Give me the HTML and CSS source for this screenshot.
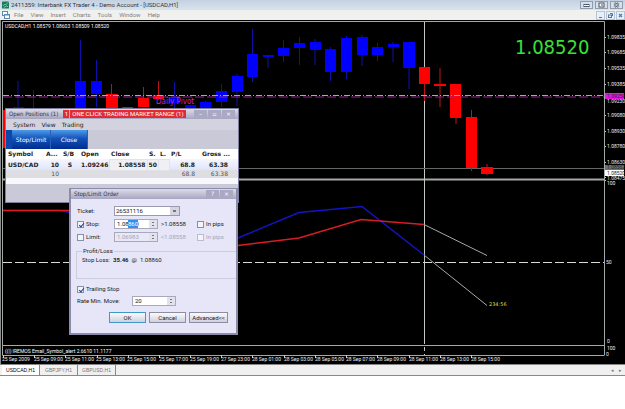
FILE: index.html
```html
<!DOCTYPE html>
<html lang="en">
<head>
<meta charset="utf-8">
<title>2411359: Interbank FX Trader 4 - Demo Account - [USDCAD,H1]</title>
<link rel="stylesheet" href="styles.css">
</head>
<body>
<header class="titlebar">
  <svg class="app-icon" viewBox="0 0 8 8" aria-hidden="true"><rect width="8" height="8" rx="1" fill="#1c7a5c"/><path d="M1 5l2-2 1 1 3-3M2 7l3-2 2 1" stroke="#7fdcb4" fill="none"/></svg>
  <h1 class="app-title">2411359: Interbank FX Trader 4 - Demo Account - [USDCAD,H1]</h1>
  <div class="win-buttons">
    <button class="win-btn" aria-label="Minimize"><svg viewBox="0 0 11 6"><rect x="3" y="2.500" width="5" height="2" fill="#fff" stroke="#4c5563"/></svg></button>
    <button class="win-btn" aria-label="Maximize"><svg viewBox="0 0 11 6"><rect x="3" y="1" width="5" height="4" fill="#fff" stroke="#4c5563"/><path d="M5 3h2" stroke="#4c5563"/></svg></button>
    <button class="win-btn" aria-label="Close"><svg viewBox="0 0 11 6"><path d="M3.500 1l4 4M7.500 1l-4 4" stroke="#4c5563" stroke-width="2.400"/><path d="M3.500 1l4 4M7.500 1l-4 4" stroke="#fff" stroke-width=".8"/></svg></button>
  </div>
</header>
<nav class="menubar">
  <svg class="mdi-icon" viewBox="0 0 8 8" aria-hidden="true"><rect x=".5" y=".5" width="5" height="4" fill="#fff" stroke="#5a8ab5"/><rect x="2.500" y="3.500" width="5" height="4" fill="#fff" stroke="#5a8ab5"/><path d="M2 4h6" stroke="#5a8ab5"/></svg>
  <button>File</button><button>View</button><button>Insert</button><button>Charts</button><button>Tools</button><button>Window</button><button>Help</button>
  <div class="mdi-buttons">
    <button aria-label="Minimize chart"><svg viewBox="0 0 7 7"><path d="M2 5.500h3" stroke="#56789c"/></svg></button>
    <button aria-label="Restore chart"><svg viewBox="0 0 7 7"><rect x="1.500" y="3" width="3" height="2.500" fill="none" stroke="#56789c"/><path d="M3 1.500h2.500V4" fill="none" stroke="#56789c"/></svg></button>
    <button aria-label="Close chart"><svg viewBox="0 0 7 7"><path d="M2 2l3 3M5 2l-3 3" stroke="#56789c" stroke-width="1.200"/></svg></button>
  </div>
</nav>
<main class="stage">
  <svg class="chart" viewBox="0 20 625 344" role="img" aria-label="USDCAD hourly chart">
    <rect y="20" width="625" height="344" fill="#000"/>
    <path d="M0 20v344" stroke="#8c8c8c" stroke-width="2"/>
    <g class="frame">
      <path d="M2.500 345V21.500H604.500V355M2.500 345V355.500H604.500"/>
      <path d="M3 345.500H604"/>
      <path class="divider" d="M3 179.500H604"/>
      <path class="tick" d="M3.500 355v3M34.500 355v3M65.500 355v3M97.500 355v3M128.500 355v3M159.500 355v3M190.500 355v3M221.500 355v3M252.500 355v3M284.500 355v3M315.500 355v3M346.500 355v3M377.500 355v3M409.500 355v3M440.500 355v3M471.500 355v3"/>
      <path class="tick" d="M605 37.500h1M605 52.500h1M605 68.500h1M605 84.500h1M605 115.500h1M605 131.500h1M605 146.500h1M605 162.500h1M605 177.500h1M605 180.500h1"/>
    </g>
    <path d="M424.500 22V340" stroke="#c2c8c2"/><path d="M424.500 340V355" stroke="#c2c8c2" stroke-dasharray="4 3"/>
    <path d="M3 168.500H604" stroke="#626862"/>
    <g class="up">
      <path d="M18 81V110M33.500 90V110M80.500 40V110M96.500 60V107M174.500 82V110M205.500 101V110M221.500 84V107M237 74V106M252.500 29V82M268 55V68M283.500 40V62M299.500 37V65M315 39V65M330.500 47V81M346.500 36V79M362 35V66M377.500 43V61M393 42V62M409 42V89"/>
      <path class="body" d="M13 107h11v3H13zM75 81h11v28H75zM91 81h11v13H91zM169 97h11v6h-11zM185 105h11v3h-11zM200 102h11v7h-11zM216 91h11v11h-11zM232 76h11v16h-11zM247 54h11v23h-11zM263 55h11v2h-11zM278 48h11v8h-11zM294 43h11v5h-11zM310 42h11v8h-11zM325 49h11v23h-11zM341 38h11v34h-11zM357 37h11v18h-11zM372 47h11v8h-11zM388 44h11v3h-11zM403 42h12v26h-12z"/>
    </g>
    <g class="down">
      <path d="M111.500 84V110M143.500 87V107M158.500 81V100M424.500 67V101M440 68V107M456 84V124M471.500 110V171M487 164V175"/>
      <path class="body" d="M3 110h2v38H3zM106 94h12v16h-12zM122 107h11v2h-11zM138 98h11v9h-11zM153 95h11v4h-11zM419 67h11v17h-11zM434 84h12v2h-12zM450 84h11v34h-11zM466 117h11v51h-11zM481 167h12v7h-12z"/>
    </g>
    <path d="M3 95.500H604" stroke="#a8aca0" stroke-dasharray="6 2 1 2"/>
    <path d="M3 97H604" stroke="#9a209a" stroke-dasharray="9 3"/>
    <path d="M3 262.500H604" stroke="#d6dcd2" stroke-dasharray="9 3"/>
    <path d="M3 210.500H60L72 213M238 238L299 212.500L362 206.500L424 255" fill="none" stroke="#1414c4" stroke-width="1.500"/>
    <path d="M3 210.500H72M238 245.500L299 238L361 219.500L424 224.500" fill="none" stroke="#d81c24" stroke-width="1.500"/>
    <path d="M424 224.500L487 255.500M424 255L487 305.500" fill="none" stroke="#a8a8a8"/>
    <g class="caption">
      <text x="5" y="28">USDCAD,H1 1.08579 1.08603 1.08509 1.08520</text>
      <text x="5" y="353">((|) IREMOS Email_Symbol_alert 2.6610 11.1177</text>
    </g>
    <text class="quote" x="515" y="54">1.08520</text>
    <text class="pivot" x="156" y="104">Daily Pivot</text>
    <text class="timer" x="489" y="306">234:56</text>
    <rect x="605" y="93" width="19" height="6" fill="#e818e0"/>
    <rect x="605" y="165" width="19" height="5" fill="#6c706c"/>
    <rect x="605" y="170" width="19" height="6" fill="#fff"/>
    <g class="axis">
      <text x="607" y="39">1.09835</text><text x="607" y="54">1.09685</text><text x="607" y="70">1.09535</text><text x="607" y="86">1.09385</text>
      <text class="dark" x="607" y="98">1.09259</text><text x="607" y="103">1.09230</text><text x="607" y="117">1.09080</text><text x="607" y="133">1.08930</text><text x="607" y="148">1.08780</text><text x="607" y="164">1.08630</text>
      <text class="dark" x="607" y="169">1.08562</text><text class="dark" x="607" y="175">1.08520</text><text x="607" y="180">1.08475</text>
      <text x="607" y="185">100</text><text x="606" y="264">50</text><text x="607" y="343">0</text><text x="607" y="350">100</text><text x="606" y="356">0</text>
      <text x="2" y="361">25 Sep 2009</text><text x="34" y="361">25 Sep 09:00</text><text x="65" y="361">25 Sep 11:00</text><text x="96" y="361">25 Sep 13:00</text><text x="127" y="361">25 Sep 15:00</text><text x="159" y="361">25 Sep 17:00</text><text x="190" y="361">25 Sep 19:00</text><text x="221" y="361">27 Sep 23:00</text><text x="252" y="361">28 Sep 01:00</text><text x="284" y="361">28 Sep 03:00</text><text x="315" y="361">28 Sep 05:00</text><text x="346" y="361">28 Sep 07:00</text><text x="377" y="361">28 Sep 09:00</text><text x="409" y="361">28 Sep 11:00</text><text x="440" y="361">28 Sep 13:00</text><text x="471" y="361">28 Sep 15:00</text>
    </g>
  </svg>

  <section class="window positions">
    <div class="window-title">
      <h2>Open Positions (1)</h2>
      <button class="alert-tab"><span class="alert-mark">1</span>ONE CLICK TRADING MARKET RANGE (1)</button>
      <div class="window-controls"><button aria-label="Minimize">–</button><button aria-label="Maximize">▫</button><button aria-label="Close">×</button></div>
    </div>
    <div class="window-menu"><button>System</button><button>View</button><button>Trading</button></div>
    <div class="toolbar"><button>Stop/Limit</button><button>Close</button></div>
    <table class="grid">
      <colgroup><col class="c-symbol"><col class="c-amount"><col class="c-side"><col class="c-price"><col class="c-close"><col class="c-flag"><col class="c-flag"><col class="c-pl"><col class="c-gross"></colgroup>
      <thead><tr><th>Symbol</th><th>A...</th><th>S/B</th><th>Open</th><th>Close</th><th>S.</th><th>L.</th><th>P/L</th><th>Gross ...</th></tr></thead>
      <tbody>
        <tr class="position"><td>USD/CAD</td><td class="num">10</td><td class="mid">S</td><td>1.09246</td><td class="num cell">1.08558</td><td class="cell">50</td><td class="cell"></td><td class="num">68.8</td><td class="num">63.38</td></tr>
        <tr class="total"><td></td><td class="num">10</td><td></td><td></td><td></td><td></td><td></td><td class="num">68.8</td><td class="num">63.38</td></tr>
      </tbody>
    </table>
  </section>

  <form class="window dialog">
    <div class="window-title">
      <h2>Stop/Limit Order</h2>
      <div class="window-controls"><button type="button" aria-label="Help">?</button><button type="button" aria-label="Close">×</button></div>
    </div>
    <div class="dialog-body">
      <div class="fields">
        <label for="ticket">Ticket:</label>
        <select id="ticket"><option>26531116</option></select>
        <label class="check"><input type="checkbox" checked>Stop:</label>
        <div class="spin"><input aria-label="Stop rate" value="1.08860"><span class="selection" aria-hidden="true">860</span><span class="arrows"></span></div>
        <span class="bound">&gt;1.08558</span>
        <label class="check"><input type="checkbox">In pips</label>
        <label class="check"><input type="checkbox">Limit:</label>
        <div class="spin off"><input aria-label="Limit rate" value="1.06983" disabled><span class="arrows"></span></div>
        <span class="bound off">&lt;1.08558</span>
        <label class="check off"><input type="checkbox" disabled>In pips</label>
      </div>
      <fieldset class="profit"><legend>Profit/Loss</legend>Stop Loss:&#160; <b>35.46</b> &#160;@&#160; 1.08860</fieldset>
      <label class="check"><input type="checkbox" checked>Trailing Stop</label>
      <div class="move"><label for="move">Rate Min. Move:</label><div class="spin"><input id="move" value="20"><span class="arrows"></span></div></div>
      <div class="actions"><button class="default" type="button">OK</button><button type="button">Cancel</button><button type="button">Advanced&lt;&lt;</button></div>
    </div>
  </form>
</main>
<footer class="tabs">
  <button class="active">USDCAD,H1</button><button>GBPJPY,H1</button><button>GBPUSD,H1</button>
  <div class="tab-scroll"><button aria-label="Scroll left">◂</button><button aria-label="Scroll right">▸</button></div>
</footer>
</body>
</html>
```
FILE: styles.css
```css
* { box-sizing: border-box; }
body {
  margin: 0;
  background: #fff;
  color: #222;
  font: 6px/8px "Liberation Sans", sans-serif;
}
button, input, select {
  font: inherit;
  color: inherit;
  margin: 0;
  padding: 0;
  border: 0;
  background: none;
  border-radius: 0;
}
button { white-space: nowrap; }
h1, h2 { margin: 0; font-size: 6px; font-weight: normal; }
svg { display: block; }

.titlebar {
  display: flex;
  align-items: center;
  height: 10px;
  padding: 0 2px;
  background: linear-gradient(#c3d1e0, #d8e3f0);
}
.app-icon { width: 7px; height: 8px; }
.app-title { flex: 1; margin-left: 2px; color: #333; font: 6px/8px Roboto, "Liberation Sans", sans-serif; }
.win-buttons { display: flex; gap: 2px; }
.win-btn { width: 13px; height: 8px; border: 1px solid #8f9dae; background: #d5e0eb; }
.win-btn svg { width: 11px; height: 6px; }

.menubar {
  display: flex;
  align-items: center;
  gap: 7px;
  height: 10px;
  padding-left: 2px;
  background: #f0f0ee;
  color: #808080;
  font-family: Roboto, "Liberation Sans", sans-serif;
}
.mdi-icon { width: 8px; height: 8px; margin-right: -3px; }
.mdi-buttons { display: flex; gap: 1px; margin-left: auto; }
.mdi-buttons button { width: 9px; height: 9px; border: 1px solid #b5c4d6; background: #e6f0fa; }

.stage { position: relative; background: #000; }
.chart { width: 100%; height: auto; }
.frame path { fill: none; stroke: #a3aaa3; }
.frame .divider { stroke-width: 2; }
.frame .tick { stroke: #ccc; }
.up path { stroke: #1010a8; stroke-width: 1; }
.up .body { fill: #00f; stroke: none; }
.down path { stroke: #c01414; stroke-width: 1; }
.down .body { fill: #f00; stroke: none; }
.caption { fill: #fff; font: 5px Roboto, "Liberation Sans", sans-serif; }
.axis { fill: #eee; font: 5px Roboto, "Liberation Sans", sans-serif; }
.axis .dark { fill: #222; }
.quote { fill: #38e038; font: 20px "DejaVu Sans Condensed", "DejaVu Sans", sans-serif; }
.pivot { fill: #cc22cc; font: 8px "DejaVu Sans Condensed", "DejaVu Sans", sans-serif; }
.timer { fill: #dede50; font: 5px "DejaVu Sans", sans-serif; }

.window {
  position: absolute;
  border: 1px solid #7d7d9e;
  background: #c9c9d8;
  font-family: "DejaVu Sans", sans-serif;
}
.window-title {
  display: flex;
  align-items: center;
  height: 10px;
  padding: 0 3px;
  background: linear-gradient(#dcdce8, #a6a6c2);
  color: #333;
}
.window-title h2 { font-family: "DejaVu Sans Condensed", "DejaVu Sans", sans-serif; }
.window-controls { display: flex; gap: 1px; margin-left: auto; color: #fff; }
.window-controls button { width: 13px; height: 8px; background: #a9a9c4; line-height: 6px; }
.positions { left: 5px; top: 88px; width: 234px; height: 95px; }
.alert-tab { display: flex; margin-left: 5px; padding-right: 2px; background: #e02c34; color: #fff; font: 6px/8px Roboto, "Liberation Sans", sans-serif; }
.alert-mark { width: 7px; margin-right: 2px; border-right: 1px solid #f4a0a0; }
.window-menu { display: flex; gap: 6px; height: 11px; padding-left: 7px; background: #d3d3e0; }
.toolbar { display: flex; height: 19px; }
.toolbar button {
  width: 37px;
  background: linear-gradient(#4d9bea, #1252b8 45%, #002c90);
  color: #fff;
  border-right: 1px solid #2461b8;
}
.toolbar button:first-child { width: 45px; border-left: 6px solid #0b49a8; }
.grid { width: 100%; border-collapse: collapse; table-layout: fixed; background: #fff; border-bottom: 6px solid #f8f8fc; }
.grid th, .grid td { height: 11px; padding: 0 2px; text-align: left; white-space: nowrap; overflow: hidden; }
.grid th { height: 10px; }
.grid .num { text-align: right; }
.grid tr > .num:nth-child(n + 8) { padding-right: 5px; }
.grid tr > .num:last-child { padding-right: 10px; }
.grid .mid { text-align: center; }
.c-symbol { width: 38px; }
.c-amount { width: 17px; }
.c-side { width: 18px; }
.c-price { width: 30px; }
.c-close { width: 38px; }
.c-flag { width: 11px; }
.c-pl { width: 31px; }
.position { background: linear-gradient(#f6f6ff, #dfe5f8); font-weight: bold; }
.position .cell { background: #f0f0f4; border: 1px solid #e2e2ea; padding: 0 1px; }
.total { background: #dedee2; color: #555; }

.dialog { left: 69px; top: 168px; width: 169px; height: 147px; border: 2px solid #8b8bab; border-top-width: 1px; background: #e6e6f8; }
.dialog-body { padding: 7px 0 0 6px; font-family: Roboto, "Liberation Sans", sans-serif; }
.fields { display: grid; grid-template-columns: 36px 44px 37px 1fr; gap: 3px 1px; align-items: center; }
.fields select { grid-column: 2 / 5; width: 66px; height: 10px; appearance: none; border: 1px solid #9a9aae; padding-left: 1px; background: linear-gradient(#777, #777) right 3px center / 3px 2px no-repeat, linear-gradient(#d5d5e2, #d5d5e2) right / 9px 100% no-repeat #fff; }
.bound { padding-left: 2px; }
.check { display: flex; align-items: center; gap: 2px; white-space: nowrap; }
.check input { appearance: none; width: 7px; height: 7px; border: 1px solid #8290ac; background: #f4f4fc; }
.check input:checked::after { content: ""; display: block; width: 2px; height: 4px; margin-left: 2px; border: solid #24408c; border-width: 0 1px 1px 0; transform: rotate(40deg); }
.spin { position: relative; display: flex; width: 44px; height: 10px; border: 1px solid #a8a8bc; background: #fff; }
.spin input { flex: 1; min-width: 0; padding-left: 2px; }
.arrows { width: 8px; background: linear-gradient(#777, #777) 3px 2px / 2px 1px no-repeat, linear-gradient(#777, #777) 3px 5px / 2px 1px no-repeat, #e2e2ee; }
.selection { position: absolute; left: 13px; top: 0; background: #3390f0; color: #fff; }
.off { color: #a5a5b5; }
.off input { border-color: #bcbccc; }
.spin.off { background: #e8e8f6; }
.profit { margin: 5px 0 6px -1px; padding: 1px 5px 14px; border: 1px solid #cdcddd; border-right: 0; }
.profit legend { padding: 0 1px; }
.move { display: flex; align-items: center; margin-top: 3px; }
.move label { width: 55px; }
.actions { display: flex; gap: 3px; margin: 6px 0 0 32px; }
.actions button { width: 37px; height: 11px; border: 1px solid #8d8da0; background: linear-gradient(#fafafe, #d0d0de); }
.actions button:last-child { width: 39px; }
.actions .default { border-color: #3c9ac8; }

.tabs {
  display: flex;
  height: 12px;
  padding-left: 2px;
  background: #f0f0f0;
  border-top: 1px solid #888;
  border-bottom: 1px solid #888;
  color: #777;
  font: 5px/8px "Liberation Sans", sans-serif;
}
.tabs > button { width: 38px; border-right: 1px solid #888; }
.tabs > .active { background: #fff; color: #000; }
.tab-scroll { display: flex; gap: 5px; margin-left: auto; padding-right: 3px; }
```
